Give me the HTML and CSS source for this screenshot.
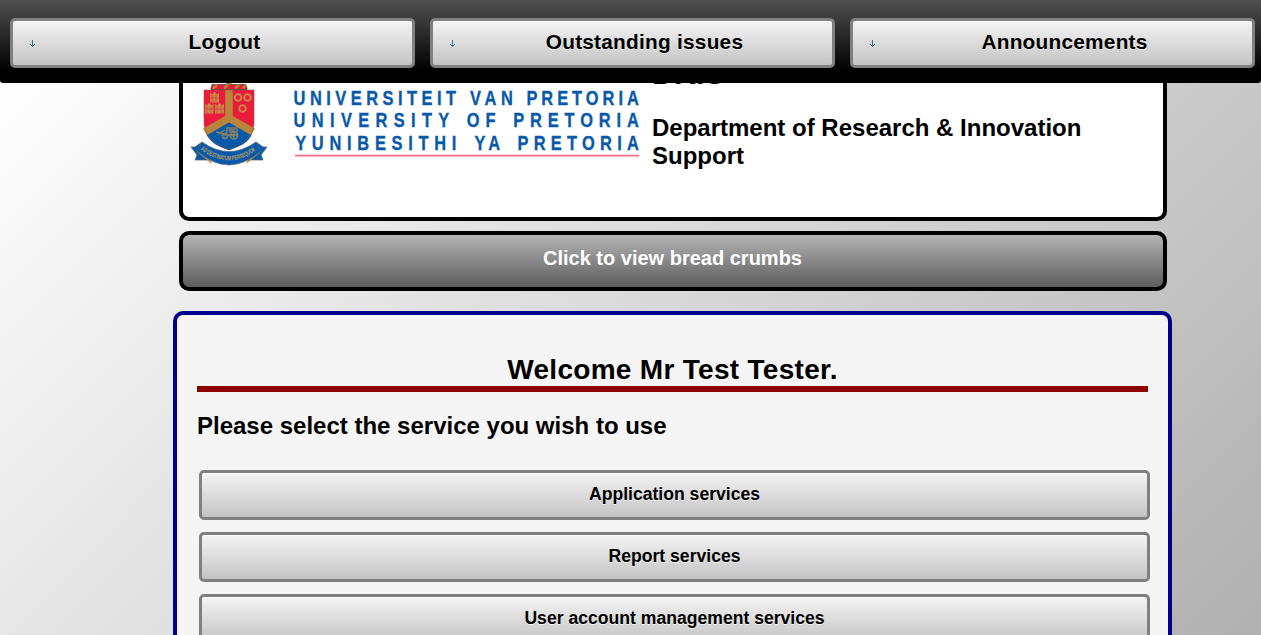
FILE: index.html
```html
<!DOCTYPE html>
<html lang="en">
<head>
<meta charset="utf-8">
<title>DRIS</title>
<link rel="stylesheet" href="styles.css">
</head>
<body>
<nav class="topbar">
  <a class="button nav-button"><svg class="arrow" viewBox="0 0 5 7"><path d="M2 0h1v7h-1zM0 4h1v1h-1zM4 4h1v1h-1zM1 5h3v1h-3z"/></svg><span>Logout</span></a>
  <a class="button nav-button"><svg class="arrow" viewBox="0 0 5 7"><path d="M2 0h1v7h-1zM0 4h1v1h-1zM4 4h1v1h-1zM1 5h3v1h-3z"/></svg><span>Outstanding issues</span></a>
  <a class="button nav-button"><svg class="arrow" viewBox="0 0 5 7"><path d="M2 0h1v7h-1zM0 4h1v1h-1zM4 4h1v1h-1zM1 5h3v1h-3z"/></svg><span>Announcements</span></a>
</nav>
<div class="page">
  <header class="banner">
    <svg class="logo" viewBox="183 75 462 100" role="img" aria-label="University of Pretoria">
      <path d="M204 90H254V122C254 137 243 145 229 150C215 145 204 137 204 122Z" fill="#ec1b3b"/>
      <path d="M229 122L206 134C210 142 218 147 229 150C240 147 249 142 252 134Z" fill="#0859aa"/>
      <path d="M229 90V119M229 118L205 132M229 118L253 132" stroke="#b9853b" stroke-width="7.5" fill="none"/>
      <path d="M204 90H254V122C254 137 243 145 229 150C215 145 204 137 204 122Z" fill="none" stroke="#8b5549" stroke-width=".6"/>
      <g fill="#c98645">
        <path d="M210 92.500l2 2 2.500-3 2.500 3 2-2v10h-9zM205 103.500l2 2 2-3 2.500 3 2-2v10h-8.500zM215 103.500l2 2 2.500-3 2.500 3 2-2v10h-9z"/>
      </g>
      <path d="M210 98h9M212 95v7M216 95v7M205 109h8M207 106v7M211 106v7M215 109h9M217 106v7M221 106v7" stroke="#dd3a3e" stroke-width=".7"/>
      <g fill="none" stroke="#c98645" stroke-width="2"><circle cx="238" cy="97.500" r="3.300"/><circle cx="247.500" cy="97.500" r="3.300"/><circle cx="242.500" cy="108.500" r="3.300"/></g>
      <path d="M212 84.500H245.500L247 88V89.500H211V88Z" fill="#e51b38" stroke="#564735" stroke-width=".8"/>
      <path d="M213 88.500l4-3.500M224 88.500l4-3.500M235 88.500l4-3.500M243 88.500l2-3" stroke="#b8843b" stroke-width="2.500"/>
      <path d="M225 81H233L231 85H227Z" fill="#9b793c"/>
      <g fill="none" stroke="#8c8063" stroke-width="1.400"><path d="M227 133V128H237V135H225M216 132L226 135M220 133L225 130M229 130h6M229 132h7"/><circle cx="225" cy="136" r="2.500"/><circle cx="234" cy="135.500" r="3.600"/><path d="M230 135.500h8M234 132v7"/></g>
      <path d="M202 142L195 147L191 147L197 155L195 160H208L210 153ZM256 142L263 147L267 147L261 155L263 160H250L248 153Z" fill="#0859aa" stroke="#53606a" stroke-width=".7"/>
      <path d="M197 152L212 164L209 156ZM261 152L246 164L249 156Z" fill="#c08a40"/>
      <path d="M202 142Q229 161 256 142L261 151Q229 179 197 151Z" fill="#0859aa" stroke="#5b6d75" stroke-width=".7"/>
      <path id="motto" d="M200.500 149.500Q229 172 259 148" fill="none"/>
      <text class="motto"><textPath href="#motto" textLength="60" lengthAdjust="spacingAndGlyphs">AD DESTINATUM PERSEQUOR</textPath></text>
      <g class="wordmark">
        <g transform="translate(0 105) scale(.8 1)"><text x="367" textLength="203">UNIVERSITEIT</text><text x="587.500" textLength="53.500">VAN</text><text x="658" textLength="140.500">PRETORIA</text></g>
        <g transform="translate(0 127.300) scale(.8 1)"><text x="367" textLength="194.500">UNIVERSITY</text><text x="583.500" textLength="36">OF</text><text x="641.500" textLength="157">PRETORIA</text></g>
        <g transform="translate(0 149.800) scale(.8 1)"><text x="369" textLength="201.500">YUNIBESITHI</text><text x="593" textLength="32">YA</text><text x="647" textLength="151.500">PRETORIA</text></g>
      </g>
      <path d="M295 155.700H639" stroke="#fb6d83" stroke-width="1.800"/>
    </svg>
    <div class="banner-text">
      <h1 class="site-title">DRIS</h1>
      <h2 class="department">Department of Research &amp; Innovation Support</h2>
    </div>
  </header>
  <div class="crumbs">Click to view bread crumbs</div>
  <main class="panel">
    <h1 class="welcome">Welcome Mr Test Tester.</h1>
    <h2 class="prompt">Please select the service you wish to use</h2>
    <div class="services">
      <a class="button">Application services</a>
      <a class="button">Report services</a>
      <a class="button">User account management services</a>
    </div>
  </main>
</div>
</body>
</html>
```
FILE: styles.css
```css
* { box-sizing: border-box; }
html, body { height: 100%; }
body {
  margin: 0;
  overflow: hidden;
  font-family: "Liberation Sans", Arial, sans-serif;
  font-weight: bold;
  color: #000;
  background: linear-gradient(135deg, #fff 4%, #b0b0b0);
}
h1, h2 { margin: 0; }
.topbar {
  position: fixed;
  top: 0;
  left: 0;
  right: 0;
  z-index: 2;
  height: 83px;
  padding: 18px 6px 0 10px;
  display: grid;
  grid-template-columns: repeat(3, 405px);
  gap: 15px;
  align-items: start;
  background: linear-gradient(#505050, #000 85%);
  border-radius: 0 0 3px 3px;
}
.button {
  display: flex;
  align-items: center;
  justify-content: center;
  height: 50px;
  padding-bottom: 2px;
  border: 3px solid #808080;
  border-radius: 5px;
  background: linear-gradient(#f4f4f4, #c4c4c4);
  box-shadow: inset 0 1px #fff;
  font-size: 17.6px;
  text-shadow: 0 1px #eee;
}
.nav-button { font-size: 20.8px; letter-spacing: 0.25px; padding: 0 0 3px 17px; }
.nav-button span { flex: 1; text-align: center; padding-left: 2px; }
.arrow { width: 5px; height: 7px; margin-top: 4px; shape-rendering: crispEdges; }
.arrow path { fill: #3b7190; }
.page { width: 999px; height: 100%; margin-left: 173px; overflow: hidden; }
.banner {
  display: flex;
  width: 988px;
  height: 221px;
  margin-left: 6px;
  background: #fff;
  border: 4px solid #000;
  border-radius: 10px;
}
.logo { flex: none; width: 462px; height: 100px; margin-top: 71px; }
.motto { font-size: 6.5px; fill: #b79d5d; }
.wordmark { font-size: 20.5px; fill: #0859aa; stroke: #0859aa; stroke-width: 0.35px; }
.banner-text { width: 480px; padding: 51px 0 0 7px; }
.site-title { font-size: 30.5px; line-height: 36px; }
.department { margin-top: 23px; font-size: 24px; line-height: 28px; }
.crumbs {
  display: flex;
  align-items: center;
  justify-content: center;
  width: 988px;
  height: 60px;
  margin: 10px 0 0 6px;
  padding: 0 1px 6px 0;
  border: 4px solid #000;
  border-radius: 10px;
  background: linear-gradient(#b4b4b4, #5c5c5c);
  color: #fff;
  font-size: 20px;
}
.panel {
  height: 400px;
  margin-top: 20px;
  padding: 36px 20px 0;
  border: 4px solid #00008b;
  border-radius: 10px;
  background: #f5f5f5;
}
.welcome {
  height: 41px;
  border-bottom: 6px solid #8b0000;
  text-align: center;
  font-size: 28px;
  line-height: 38px;
  letter-spacing: 0.3px;
}
.prompt { margin-top: 20px; font-size: 24px; line-height: 28px; }
.services { display: grid; gap: 12px; margin: 30px -2px 0 2px; }
```
